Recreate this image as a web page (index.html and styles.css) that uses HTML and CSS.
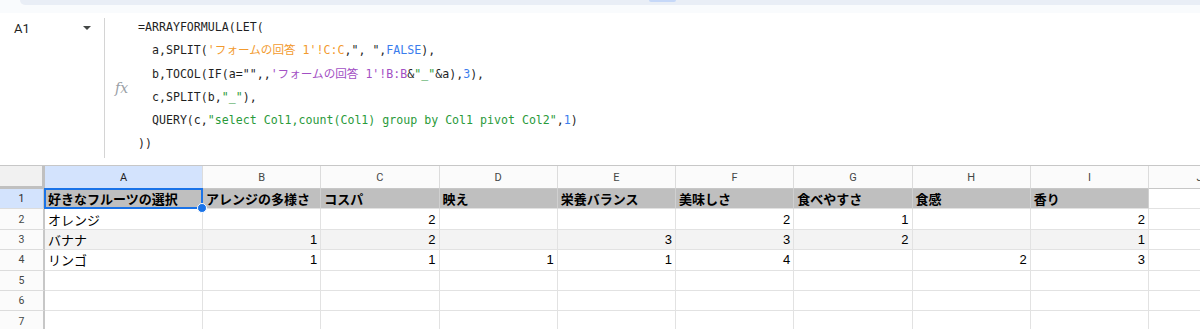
FILE: index.html
```html
<!DOCTYPE html>
<html lang="ja">
<head>
  <meta charset="UTF-8">
  <meta name="viewport" content="width=device-width">
  <title>フォームの回答 集計</title>
  <link rel="stylesheet" href="styles.css">
</head>
<body>
  <div class="top">
    <div class="toolbar"><span class="tab-mark"></span></div>
  </div>

  <div class="formula-bar">
    <div class="name-box">
      <span class="ref">A1</span>
      <span class="caret"></span>
    </div>
    <div class="fx">fx</div>
    <div class="formula">
      <div class="line">=ARRAYFORMULA(LET(</div>
      <div class="line">  a,SPLIT(<span class="c-orange">'フォームの回答 1'!C:C</span>,", ",<span class="c-blue">FALSE</span>),</div>
      <div class="line">  b,TOCOL(IF(a="",,<span class="c-purple">'フォームの回答 1'!B:B</span>&amp;<span class="c-green">"_"</span>&amp;a),<span class="c-blue">3</span>),</div>
      <div class="line">  c,SPLIT(b,<span class="c-green">"_"</span>),</div>
      <div class="line">  QUERY(c,<span class="c-green">"select Col1,count(Col1) group by Col1 pivot Col2"</span>,<span class="c-blue">1</span>)</div>
      <div class="line">))</div>
    </div>
  </div>

  <div class="sheet">
    <!-- column headers -->
    <div class="corner"></div>
    <div class="col-head active">A</div>
    <div class="col-head">B</div>
    <div class="col-head">C</div>
    <div class="col-head">D</div>
    <div class="col-head">E</div>
    <div class="col-head">F</div>
    <div class="col-head">G</div>
    <div class="col-head">H</div>
    <div class="col-head">I</div>
    <div class="col-head">J</div>

    <!-- row 1 -->
    <div class="row-head active">1</div>
    <div class="cell head selected">好きなフルーツの選択<span class="handle"></span></div>
    <div class="cell head">アレンジの多様さ</div>
    <div class="cell head">コスパ</div>
    <div class="cell head">映え</div>
    <div class="cell head">栄養バランス</div>
    <div class="cell head">美味しさ</div>
    <div class="cell head">食べやすさ</div>
    <div class="cell head">食感</div>
    <div class="cell head">香り</div>
    <div class="cell"></div>

    <!-- row 2 -->
    <div class="row-head">2</div>
    <div class="cell">オレンジ</div>
    <div class="cell num"></div>
    <div class="cell num">2</div>
    <div class="cell num"></div>
    <div class="cell num"></div>
    <div class="cell num">2</div>
    <div class="cell num">1</div>
    <div class="cell num"></div>
    <div class="cell num">2</div>
    <div class="cell"></div>

    <!-- row 3 -->
    <div class="row-head">3</div>
    <div class="cell band">バナナ</div>
    <div class="cell band num">1</div>
    <div class="cell band num">2</div>
    <div class="cell band num"></div>
    <div class="cell band num">3</div>
    <div class="cell band num">3</div>
    <div class="cell band num">2</div>
    <div class="cell band num"></div>
    <div class="cell band num">1</div>
    <div class="cell"></div>

    <!-- row 4 -->
    <div class="row-head">4</div>
    <div class="cell">リンゴ</div>
    <div class="cell num">1</div>
    <div class="cell num">1</div>
    <div class="cell num">1</div>
    <div class="cell num">1</div>
    <div class="cell num">4</div>
    <div class="cell num"></div>
    <div class="cell num">2</div>
    <div class="cell num">3</div>
    <div class="cell"></div>

    <!-- empty rows -->
    <div class="row-head">5</div>
    <div class="cell"></div><div class="cell"></div><div class="cell"></div><div class="cell"></div><div class="cell"></div>
    <div class="cell"></div><div class="cell"></div><div class="cell"></div><div class="cell"></div><div class="cell"></div>

    <div class="row-head">6</div>
    <div class="cell"></div><div class="cell"></div><div class="cell"></div><div class="cell"></div><div class="cell"></div>
    <div class="cell"></div><div class="cell"></div><div class="cell"></div><div class="cell"></div><div class="cell"></div>

    <div class="row-head">7</div>
    <div class="cell"></div><div class="cell"></div><div class="cell"></div><div class="cell"></div><div class="cell"></div>
    <div class="cell"></div><div class="cell"></div><div class="cell"></div><div class="cell"></div><div class="cell"></div>
  </div>
</body>
</html>
```

FILE: styles.css
```css
html, body {
  margin: 0;
  padding: 0;
  overflow: hidden;
  background: #fff;
  font-family: "Liberation Sans", "Noto Sans CJK JP", sans-serif;
  color: #1f1f1f;
}

.top {
  height: 13px;
  background: #f9fbfd;
}
.toolbar {
  position: relative;
  height: 5px;
  margin-left: 20px;
  background: #e9eef6;
  border-bottom-left-radius: 10px;
}
.tab-mark {
  position: absolute;
  left: 629px;
  top: 0;
  width: 27px;
  height: 2px;
  border-radius: 0 0 2px 2px;
  background: #c6d8f8;
}

.formula-bar {
  display: flex;
  height: 152px;
  background: #fff;
}
.name-box {
  width: 104px;
  box-sizing: border-box;
  display: flex;
  align-items: center;
  justify-content: space-between;
  height: 24px;
  margin-top: 3px;
  padding: 0 13px 0 14px;
  font-family: Roboto, "Liberation Sans", sans-serif;
  font-size: 13px;
}
.caret {
  width: 0;
  height: 0;
  border-left: 4px solid transparent;
  border-right: 4px solid transparent;
  border-top: 4px solid #444746;
}
.fx {
  align-self: center;
  width: 34px;
  height: 140px;
  margin-top: -2px;
  box-sizing: border-box;
  border-left: 1px solid #d4d4d4;
  display: flex;
  align-items: center;
  padding-left: 10px;
  font-family: "DejaVu Serif", "Liberation Serif", serif;
  font-style: italic;
  font-size: 14px;
  color: #9aa0a6;
}
.formula {
  padding-top: 3px;
  font-family: "DejaVu Sans Mono", "Noto Sans CJK JP", monospace;
  font-size: 11.6px;
  line-height: 23.3px;
  color: #1f1f1f;
}
.line {
  white-space: pre;
}
.c-orange { color: #f29a2e; }
.c-blue { color: #3b7ded; }
.c-purple { color: #a24fc4; }
.c-green { color: #2a9a3a; }

.sheet {
  display: grid;
  grid-template-columns: 45px 158px repeat(8, 118.25px) 102px;
  grid-template-rows: 23px repeat(6, 20.4px) 21px;
  width: 1251px;
  border-top: 1px solid #c7c7c7;
  font-size: 13px;
}
.corner {
  background: #f1f1f1;
  border-right: 3px solid #c0c0c0;
  border-bottom: 3px solid #c0c0c0;
}
.col-head {
  display: flex;
  align-items: center;
  justify-content: center;
  background: #fbfbfb;
  border-right: 1px solid #dcdcdc;
  border-bottom: 1px solid #c7c7c7;
  font-family: Roboto, "Liberation Sans", sans-serif;
  font-size: 11px;
  color: #444746;
}
.row-head {
  display: flex;
  align-items: center;
  justify-content: center;
  background: #fbfbfb;
  border-right: 2px solid #c7c7c7;
  border-bottom: 1px solid #dcdcdc;
  font-family: Roboto, "Liberation Sans", sans-serif;
  font-size: 10.5px;
  color: #444746;
}
.col-head.active,
.row-head.active {
  background: #d3e3fd;
  color: #1f1f1f;
}
.col-head, .row-head, .cell, .corner {
  box-sizing: border-box;
}

.cell {
  display: flex;
  align-items: center;
  padding: 0 3px;
  border-right: 1px solid #e2e2e2;
  border-bottom: 1px solid #e2e2e2;
  white-space: nowrap;
  overflow: visible;
  color: #000;
}
.cell.num {
  justify-content: flex-end;
}
.cell.head {
  background: #bfbfbf;
  font-weight: bold;
  border-right-color: #d0d0d0;
}
.cell.band {
  background: #f3f3f3;
}

.cell.selected {
  position: relative;
}
.cell.selected::after {
  content: "";
  position: absolute;
  left: -1px;
  top: -1px;
  right: -1px;
  bottom: -1px;
  border: 2px solid #1a73e8;
}
.handle {
  position: absolute;
  right: -5px;
  bottom: -5px;
  width: 8px;
  height: 8px;
  border-radius: 50%;
  background: #1a73e8;
  border: 1px solid #fff;
  z-index: 2;
}
```
